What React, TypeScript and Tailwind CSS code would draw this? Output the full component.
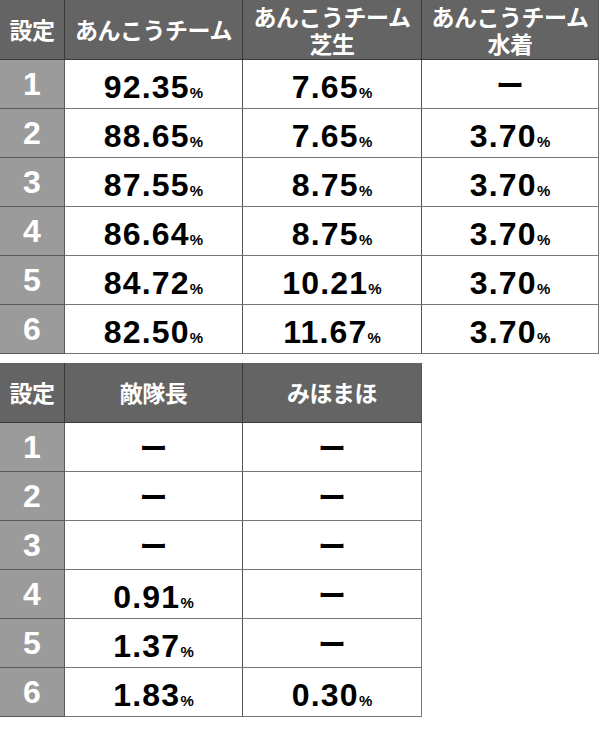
import React from "react"

const jp = "font-['Noto_Sans_CJK_JP',sans-serif]"
const num = "font-['Liberation_Sans','Noto_Sans_CJK_JP',sans-serif]"

type Row = { level: string; values: (string | null)[] }

const table1: Row[] = [
    { level: "1", values: ["92.35", "7.65", null] },
    { level: "2", values: ["88.65", "7.65", "3.70"] },
    { level: "3", values: ["87.55", "8.75", "3.70"] },
    { level: "4", values: ["86.64", "8.75", "3.70"] },
    { level: "5", values: ["84.72", "10.21", "3.70"] },
    { level: "6", values: ["82.50", "11.67", "3.70"] },
]

const table2: Row[] = [
    { level: "1", values: [null, null] },
    { level: "2", values: [null, null] },
    { level: "3", values: [null, null] },
    { level: "4", values: ["0.91", null] },
    { level: "5", values: ["1.37", null] },
    { level: "6", values: ["1.83", "0.30"] },
]

function HeadCell({ children, last }: { children: React.ReactNode; last?: boolean }) {
    return (
        <div
            className={`h-[60px] bg-[#646464] border-b border-[#3a3a3a] ${last ? "border-r border-r-[#555]" : "border-r border-r-[#3a3a3a]"} flex items-center justify-center text-center text-white font-bold text-[23px] leading-[27px] tracking-[-0.5px] ${jp}`}
        >
            <p>{children}</p>
        </div>
    )
}

function Value({ v, last }: { v: string | null; last?: boolean }) {
    return (
        <div
            className={`h-[49px] bg-white border-b border-[#777] border-r ${last ? "border-r-[#777]" : "border-r-[#555]"} flex items-center justify-center text-black font-bold`}
        >
            {v === null ? (
                <span className={`${jp} text-[28px] leading-none`}>ー</span>
            ) : (
                <span className={`${num} text-[32px] leading-none tracking-[1.2px] pt-[5px]`}>
                    {v}
                    <span className="text-[15px] tracking-normal">%</span>
                </span>
            )}
        </div>
    )
}

function Level({ n }: { n: string }) {
    return (
        <div
            className={`h-[49px] bg-[#9b9b9b] border-b border-r border-[#5a5a5a] flex items-center justify-center text-white font-bold text-[32px] leading-none ${num}`}
        >
            {n}
        </div>
    )
}

export default function App() {
    return (
        <div className="w-[600px] h-[729px] bg-white">
            <div className="grid grid-cols-[65px_178px_179px_177px] w-[599px]">
                <HeadCell>設定</HeadCell>
                <HeadCell>あんこうチーム</HeadCell>
                <HeadCell>
                    あんこうチーム
                    <br />
                    芝生
                </HeadCell>
                <HeadCell last>
                    あんこうチーム
                    <br />
                    水着
                </HeadCell>
                {table1.map((r) => (
                    <React.Fragment key={r.level}>
                        <Level n={r.level} />
                        {r.values.map((v, i) => (
                            <Value key={i} v={v} last={i === r.values.length - 1} />
                        ))}
                    </React.Fragment>
                ))}
            </div>

            <div className="grid grid-cols-[65px_178px_179px] w-[422px] mt-[9px]">
                <HeadCell>設定</HeadCell>
                <HeadCell>敵隊長</HeadCell>
                <HeadCell last>みほまほ</HeadCell>
                {table2.map((r) => (
                    <React.Fragment key={r.level}>
                        <Level n={r.level} />
                        {r.values.map((v, i) => (
                            <Value key={i} v={v} last={i === r.values.length - 1} />
                        ))}
                    </React.Fragment>
                ))}
            </div>
        </div>
    )
}
